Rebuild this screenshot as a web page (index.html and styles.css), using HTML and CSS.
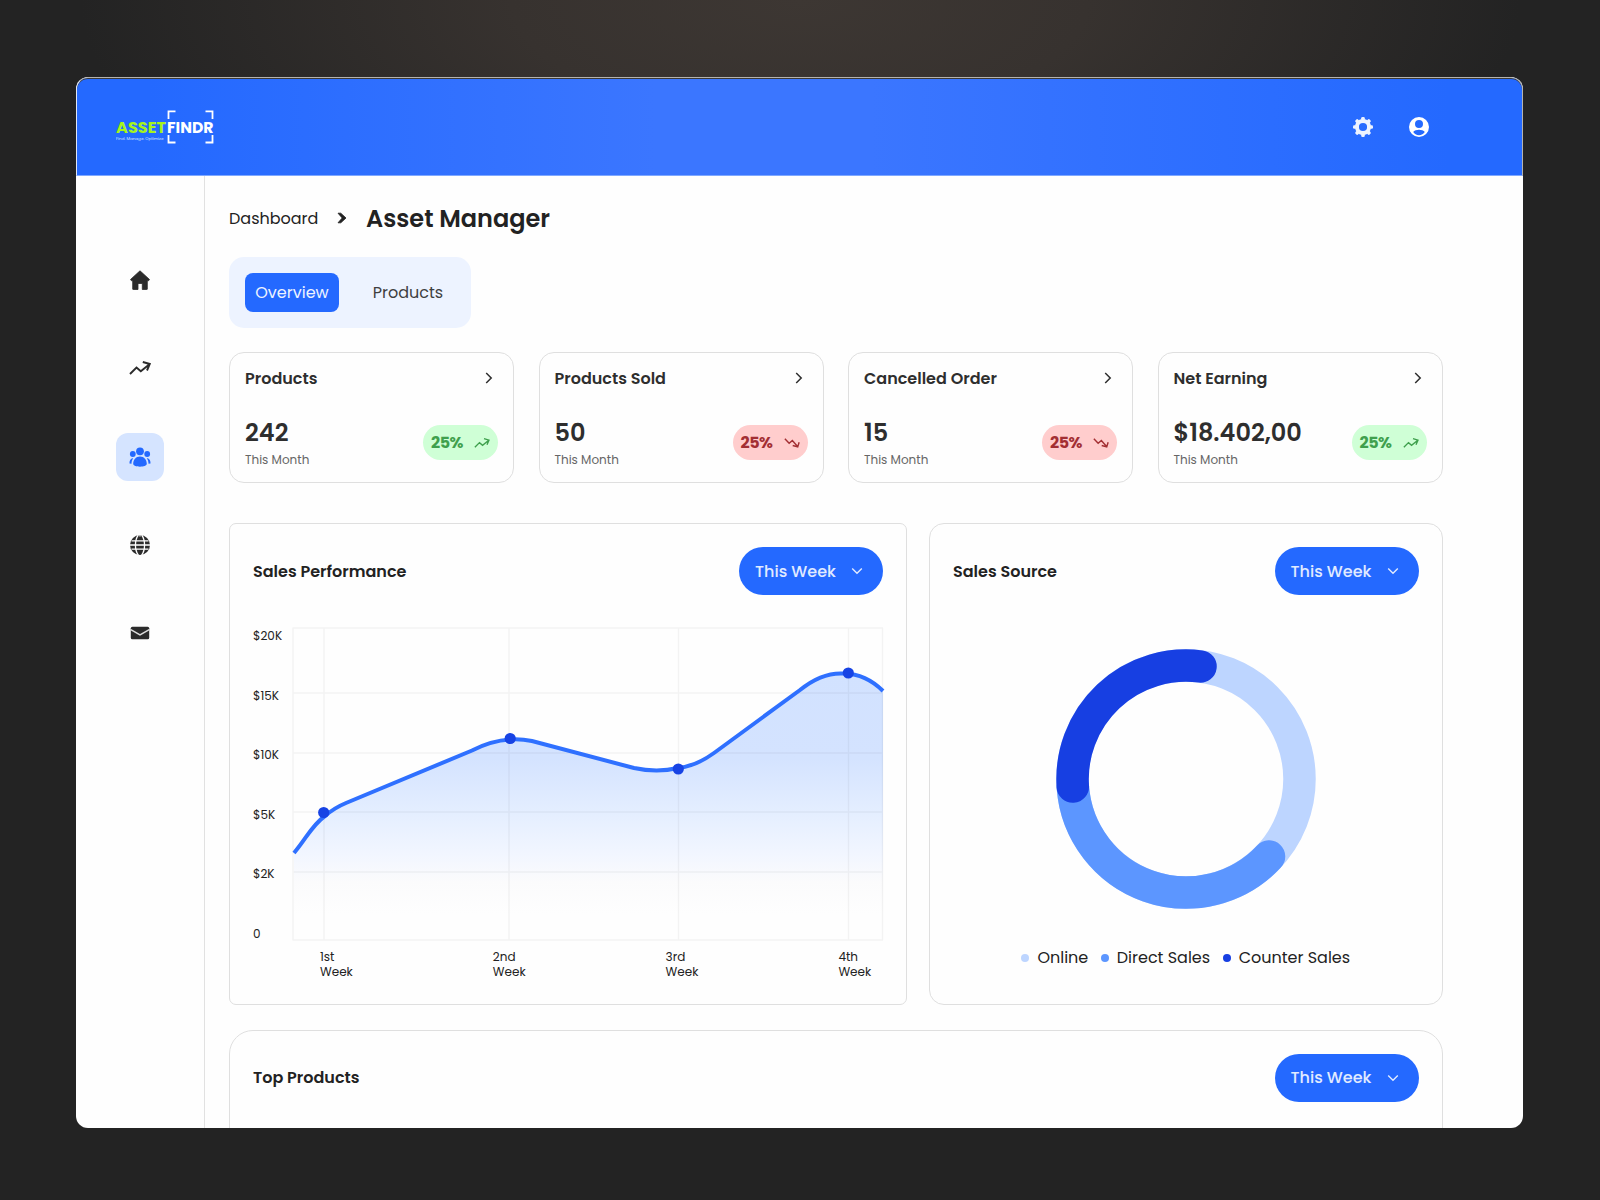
FILE: index.html
```
<!DOCTYPE html>
<html lang="en">
<head>
  <meta charset="UTF-8">
  <meta name="viewport" content="width=device-width, initial-scale=1.0">
  <title>AssetFindr - Asset Manager</title>
  <link rel="stylesheet" href="styles.css">
</head>
<body>

  <!-- Shared icons -->
  <svg class="sprite" width="0" height="0">
    <symbol id="trend-up" viewBox="0 0 22 14">
      <path d="M1 13 7.500 6.500l4.300 3.800L20.500 3.200M13.800 1l7 2L18 9.500" fill="none" stroke="currentColor" stroke-width="1.9"/>
    </symbol>
    <symbol id="trend-down" viewBox="0 0 22 14">
      <path d="M1 1.200 7 7.500l4.500-4L18.500 11.500M12 10.500l7 2L21 6" fill="none" stroke="currentColor" stroke-width="2"/>
    </symbol>
    <symbol id="chevron-right" viewBox="0 0 8 12">
      <path d="M1.200 1 6.200 6l-5 5" fill="none" stroke="currentColor" stroke-width="1.500"/>
    </symbol>
    <symbol id="chevron-down" viewBox="0 0 12 8">
      <path d="M1.200 1.500 6 6.200l4.800-4.700" fill="none" stroke="currentColor" stroke-width="1.400"/>
    </symbol>
  </svg>

  <div class="window">
    <header class="topbar">
      <svg class="logo" viewBox="0 0 98 34" width="98" height="34">
        <path d="M52.500 9V1.300H59.500M89.500 1.300H96.500V9M52.500 25V32.500H59.500M89.500 32.500H96.500V25" fill="none" stroke="#fff" stroke-width="1.800"/>
        <text class="logo-asset" x="0" y="22.500" textLength="50" lengthAdjust="spacingAndGlyphs">ASSET</text>
        <text class="logo-findr" x="51" y="22.500" textLength="46.500" lengthAdjust="spacingAndGlyphs">FINDR</text>
        <text class="logo-tag" x="0" y="30" textLength="47.500" lengthAdjust="spacingAndGlyphs">Find. Manage. Optimize</text>
      </svg>
      <div class="top-icons">
        <svg width="20" height="20" viewBox="0 0 20 20">
          <g fill="#edf3ff">
            <path fill-rule="evenodd" d="M10 2a8 8 0 1 0 0 16 8 8 0 0 0 0-16zm0 3.900a4.100 4.100 0 1 1 0 8.200 4.100 4.100 0 0 1 0-8.200z"/>
            <g id="tooth">
              <rect x="8.200" y="0" width="3.600" height="3.800" rx="1.300"/>
              <rect x="8.200" y="16.200" width="3.600" height="3.800" rx="1.300"/>
              <rect x="0" y="8.200" width="3.800" height="3.600" rx="1.300"/>
              <rect x="16.200" y="8.200" width="3.800" height="3.600" rx="1.300"/>
            </g>
            <use href="#tooth" transform="rotate(45 10 10)"/>
          </g>
        </svg>
        <svg width="20" height="20" viewBox="0 0 20 20">
          <path fill="#fff" fill-rule="evenodd" d="M10 0a10 10 0 1 0 0 20 10 10 0 0 0 0-20zm0 3a4 4 0 1 1 0 8 4 4 0 0 1 0-8zm0 15.200c-2.500 0-4.600-1.200-5.800-3.200C5 13.400 8 12.700 10 12.700s5 .7 5.800 2.300C14.600 17 12.500 18.200 10 18.200z"/>
        </svg>
      </div>
    </header>

    <div class="body">
      <nav class="sidebar">
        <a class="nav-item">
          <svg width="20" height="20" viewBox="0 0 20 20"><path d="M10 .8 19.500 9.500 18.500 10.800H17.300V19Q17.300 19.500 16.800 19.500H12.300V13.500H8V19.500H3.200Q2.700 19.500 2.700 19V10.800H1.500L.5 9.500z" fill="#2b2b2b" stroke="#2b2b2b" stroke-width=".8" stroke-linejoin="round"/></svg>
        </a>
        <a class="nav-item"><svg width="22" height="14"><use href="#trend-up"/></svg></a>
        <a class="nav-item active">
          <svg width="22" height="20" viewBox="0 0 22 20" fill="#2469ff">
            <circle cx="11" cy="4.300" r="3.900"/>
            <circle cx="3.800" cy="7" r="2.900"/>
            <circle cx="18.200" cy="7" r="2.900"/>
            <path d="M11 9.500c4.200 0 6.800 3.500 6.800 7.300 0 1.800-3.300 2.900-6.800 2.900s-6.800-1.100-6.800-2.900c0-3.800 2.600-7.300 6.800-7.300z"/>
            <path d="M3.300 11.300c-2 .7-3 3-2.800 5.200l2 .2c0-2 .6-4 1.700-5.500zM18.700 11.300c2 .7 3 3 2.800 5.200l-2 .2c0-2-.6-4-1.700-5.500z"/>
          </svg>
        </a>
        <a class="nav-item">
          <svg width="20" height="20" viewBox="0 0 20 20">
            <circle cx="10" cy="10" r="10" fill="#2b2b2b"/>
            <path d="M10 0v1.500M0 10h20M1.500 5.800H18.500M1.500 14.200H18.500M8.300 0C4.500 5 4.500 15 8.300 20M11.700 0c3.800 5 3.800 15 0 20" fill="none" stroke="#fff" stroke-width="1.300"/>
          </svg>
        </a>
        <a class="nav-item">
          <svg width="20" height="14" viewBox="0 0 20 14">
            <rect x=".8" y=".8" width="18.400" height="12.400" rx="1.500" fill="#2b2b2b"/>
            <path d="M.8 3.600 10 8.800l9.200-5.200" fill="none" stroke="#ddd" stroke-width="1.500"/>
          </svg>
        </a>
      </nav>

      <main class="main">
        <div class="breadcrumb">
          <span class="crumb">Dashboard</span>
          <svg width="10" height="12" viewBox="0 0 10 12"><path d="M1 1.200H3.800L9 6 3.800 10.800H1L5.200 6z" fill="#222" stroke="#222" stroke-width=".8" stroke-linejoin="round"/></svg>
          <h1>Asset Manager</h1>
        </div>

        <div class="tabs">
          <a class="tab selected">Overview</a>
          <a class="tab">Products</a>
        </div>

        <section class="stats">
          <div class="stat">
            <div class="stat-head"><h3>Products</h3><svg width="8" height="12"><use href="#chevron-right"/></svg></div>
            <div class="stat-foot">
              <div><p class="value">242</p><p class="period">This Month</p></div>
              <span class="pill up">25% <svg width="16" height="10"><use href="#trend-up"/></svg></span>
            </div>
          </div>
          <div class="stat">
            <div class="stat-head"><h3>Products Sold</h3><svg width="8" height="12"><use href="#chevron-right"/></svg></div>
            <div class="stat-foot">
              <div><p class="value">50</p><p class="period">This Month</p></div>
              <span class="pill down">25% <svg width="16" height="10"><use href="#trend-down"/></svg></span>
            </div>
          </div>
          <div class="stat">
            <div class="stat-head"><h3>Cancelled Order</h3><svg width="8" height="12"><use href="#chevron-right"/></svg></div>
            <div class="stat-foot">
              <div><p class="value">15</p><p class="period">This Month</p></div>
              <span class="pill down">25% <svg width="16" height="10"><use href="#trend-down"/></svg></span>
            </div>
          </div>
          <div class="stat">
            <div class="stat-head"><h3>Net Earning</h3><svg width="8" height="12"><use href="#chevron-right"/></svg></div>
            <div class="stat-foot">
              <div><p class="value">$18.402,00</p><p class="period">This Month</p></div>
              <span class="pill up">25% <svg width="16" height="10"><use href="#trend-up"/></svg></span>
            </div>
          </div>
        </section>

        <section class="charts">
          <div class="panel performance">
            <div class="panel-head">
              <h2>Sales Performance</h2>
              <button class="dropdown">This Week <svg width="12" height="8"><use href="#chevron-down"/></svg></button>
            </div>
            <div class="plot">
              <div class="y-axis">
                <span>$20K</span><span>$15K</span><span>$10K</span><span>$5K</span><span>$2K</span><span>0</span>
              </div>
              <svg class="line-chart" width="591" height="314" viewBox="0 0 591 314">
                <defs>
                  <linearGradient id="area" gradientUnits="userSpaceOnUse" x1="0" y1="46" x2="0" y2="314">
                    <stop offset="0" stop-color="#d2e2ff"/>
                    <stop offset=".32" stop-color="#d4e3ff"/>
                    <stop offset=".52" stop-color="#e4eeff"/>
                    <stop offset=".68" stop-color="#f2f6ff"/>
                    <stop offset=".78" stop-color="#fbfbfc"/>
                    <stop offset=".9" stop-color="#fefefe"/>
                  </linearGradient>
                </defs>
                <path fill="url(#area)" d="M2 226C14 212 20 196 33 189Q42 181 54 176L180 123.500Q210 108 240 114L342 141Q365 146 386 141Q404 139 422 126L508 63Q530 45 552 46.500Q574 47 591 64V313H2z"/>
                <path class="grid" d="M.5 1H591M.5 66H591M.5 126H591M.5 185H591M.5 245H591M.5 313H591M1 1V313M32 1V313M217 1V313M386.500 1V313M556.500 1V313M590.500 1V313"/>
                <path class="line" d="M2 226C14 212 20 198 33 189Q42 181 54 176L180 123.500Q210 108 240 114L342 141Q365 146 386 141Q404 139 422 126L508 63Q530 45 552 46.500Q574 47 591 64"/>
                <g class="dots">
                  <circle cx="31.700" cy="185.500" r="5.600"/>
                  <circle cx="218.200" cy="111.500" r="5.600"/>
                  <circle cx="386.300" cy="142" r="5.600"/>
                  <circle cx="556.300" cy="46" r="5.600"/>
                </g>
              </svg>
            </div>
            <div class="x-axis">
              <span>1st<br>Week</span><span>2nd<br>Week</span><span>3rd<br>Week</span><span>4th<br>Week</span>
            </div>
          </div>

          <div class="panel source">
            <div class="panel-head">
              <h2>Sales Source</h2>
              <button class="dropdown">This Week <svg width="12" height="8"><use href="#chevron-down"/></svg></button>
            </div>
            <svg class="donut" width="260" height="260" viewBox="-130 -130 260 260">
              <circle r="113.500" stroke="#bdd5ff"/>
              <path d="M83 77.500A113.500 113.500 0 0 1 -113.100 8.500" stroke="#5c96ff"/>
              <path d="M-113.200 7.500A113.500 113.500 0 0 1 14.500 -112.500" stroke="#173fe2"/>
            </svg>
            <div class="legend">
              <span class="online">Online</span>
              <span class="direct">Direct Sales</span>
              <span class="counter">Counter Sales</span>
            </div>
          </div>
        </section>

        <section class="panel top-products">
          <div class="panel-head">
            <h2>Top Products</h2>
            <button class="dropdown">This Week <svg width="12" height="8"><use href="#chevron-down"/></svg></button>
          </div>
        </section>
      </main>
    </div>
  </div>

</body>
</html>
```
FILE: styles.css
```
* {
  box-sizing: border-box;
}

body {
  margin: 0;
  height: 1200px;
  padding: 77px 77px 72px 76px;
  overflow: hidden;
  font-family: Poppins, Inter, sans-serif;
  color: #222;
  background: radial-gradient(ellipse 720px 300px at 50% 0, #3d3733 0, #37322f 40%, #232323 100%) #232323;
}

h1, h2, h3, p {
  margin: 0;
}

svg {
  display: block;
  flex: none;
}

.sprite {
  position: absolute;
}

.window {
  height: 1051px;
  border-radius: 12px;
  background: #fefefe;
  overflow: hidden;
  display: flex;
  flex-direction: column;
}

/* Top bar */
.topbar {
  height: 99px;
  flex: none;
  display: flex;
  align-items: center;
  justify-content: space-between;
  padding: 1px 93px 0 39px;
  border: 1px solid #b5b3ae;
  border-bottom: 1px solid #7fa8ff;
  border-left-color: #dfe6f5;
  border-radius: 12px 12px 0 0;
  background: linear-gradient(90deg, #2469ff 5%, #3b76ff 40%, #3b76ff 55%, #2469ff 95%);
  box-shadow: inset 0 1px 0 #3b3a38;
}

.logo text {
  font-weight: 700;
  font-size: 15.5px;
}

.logo .logo-asset {
  fill: #a6f41c;
}

.logo .logo-findr {
  fill: #fff;
}

.logo .logo-tag {
  font-size: 4px;
  font-weight: 400;
  fill: #d5e2ff;
}

.top-icons {
  display: flex;
  gap: 36.5px;
}

/* Sidebar */
.body {
  flex: 1;
  min-height: 0;
  display: flex;
}

.sidebar {
  width: 129px;
  flex: none;
  border-right: 1px solid #e1e1e1;
  padding: 80px 0 0 40px;
  display: flex;
  flex-direction: column;
  gap: 40.3px;
}

.nav-item {
  width: 48px;
  height: 48px;
  flex: none;
  border-radius: 12px;
  color: #2b2b2b;
  display: flex;
  align-items: center;
  justify-content: center;
}

.nav-item.active {
  background: #d5e4ff;
}

/* Main */
.main {
  flex: 1;
  min-width: 0;
  padding: 24px 80.5px 0 24px;
}

.breadcrumb {
  height: 36px;
  display: flex;
  align-items: center;
}

.crumb {
  width: 108px;
  font-size: 16px;
}

.breadcrumb h1 {
  margin-left: 19px;
  font-size: 24px;
  font-weight: 600;
}

.tabs {
  width: 242px;
  height: 71px;
  margin-top: 21px;
  padding: 16px;
  border-radius: 15px;
  background: #edf3ff;
  display: flex;
  gap: 22px;
}

.tab {
  width: 94px;
  border-radius: 8px;
  font-size: 16px;
  color: #3f3f3f;
  display: flex;
  align-items: center;
  justify-content: center;
}

.tab.selected {
  background: #2469ff;
  color: #edf3ff;
}

/* Stat cards */
.stats {
  margin-top: 24px;
  display: grid;
  grid-template-columns: repeat(4, 1fr);
  gap: 24.5px;
}

.stat {
  height: 131px;
  padding: 13px 15px 14px;
  border: 1px solid #dfdfdf;
  border-radius: 15px;
  display: flex;
  flex-direction: column;
  justify-content: space-between;
}

.stat-head {
  height: 24px;
  padding-right: 5px;
  display: flex;
  align-items: center;
  justify-content: space-between;
  color: #2e2e2e;
}

.stat h3 {
  font-size: 16px;
  font-weight: 600;
}

.stat-foot {
  display: flex;
  justify-content: space-between;
  align-items: center;
}

.value {
  font-size: 24px;
  line-height: 30px;
  font-weight: 600;
  color: #2e2e2e;
}

.period {
  margin-top: 4px;
  font-size: 12px;
  line-height: 16px;
  color: #666;
}

.pill {
  width: 75px;
  height: 35px;
  margin-bottom: 1px;
  padding: 0 8px;
  border-radius: 18px;
  font-size: 16px;
  font-weight: 700;
  letter-spacing: -0.5px;
  display: flex;
  align-items: center;
  justify-content: space-between;
}

.pill.up {
  background: #cfffd6;
  color: #3fa04d;
}

.pill.down {
  background: #ffcdcd;
  color: #a32f33;
}

/* Panels */
.panel {
  border: 1px solid #dfdfdf;
  border-radius: 15px;
  padding: 23px;
}

.panel-head {
  height: 48px;
  display: flex;
  align-items: center;
  justify-content: space-between;
}

.panel h2 {
  font-size: 16px;
  font-weight: 600;
}

.dropdown {
  width: 144px;
  height: 48px;
  padding: 0 20px 0 16px;
  border: none;
  border-radius: 24px;
  background: #2469ff;
  color: #e1ebff;
  font: inherit;
  font-size: 16px;
  font-weight: 500;
  display: flex;
  align-items: center;
  justify-content: space-between;
}

.charts {
  margin-top: 40px;
  display: grid;
  grid-template-columns: 678px 1fr;
  gap: 22px;
}

.charts .panel {
  height: 482px;
}

.charts .performance {
  border-radius: 7px;
}

.plot {
  margin-top: 32px;
  display: flex;
}

.y-axis {
  width: 39px;
  position: relative;
  top: 1px;
  font-size: 12px;
  line-height: 16px;
  display: flex;
  flex-direction: column;
  justify-content: space-between;
}

.line-chart {
  overflow: visible;
}

.grid {
  fill: none;
  stroke: #000;
  stroke-opacity: 0.045;
  stroke-width: 1.5;
}

.line {
  fill: none;
  stroke: #2f70ff;
  stroke-width: 4;
}

.dots {
  fill: #1743e4;
}

.x-axis {
  margin-top: 9px;
  padding-left: 67px;
  display: flex;
  font-size: 12px;
  line-height: 14.5px;
}

.x-axis span {
  width: 172.8px;
  flex: none;
}

.source {
  display: flex;
  flex-direction: column;
}

.donut {
  align-self: center;
  margin-top: 54px;
}

.donut circle,
.donut path {
  fill: none;
  stroke-width: 32.5;
  stroke-linecap: round;
}

.legend {
  margin-top: 37px;
  display: flex;
  justify-content: center;
  gap: 12.5px;
  font-size: 16px;
  line-height: 24px;
}

.legend span {
  display: flex;
  align-items: center;
  gap: 8px;
}

.legend span::before {
  content: "";
  width: 8px;
  height: 8px;
  border-radius: 50%;
}

.legend .online::before {
  background: #bdd5ff;
}

.legend .direct::before {
  background: #5c96ff;
}

.legend .counter::before {
  background: #173fe2;
}

.top-products {
  height: 200px;
  margin-top: 24.5px;
  border-radius: 24px;
}
```
